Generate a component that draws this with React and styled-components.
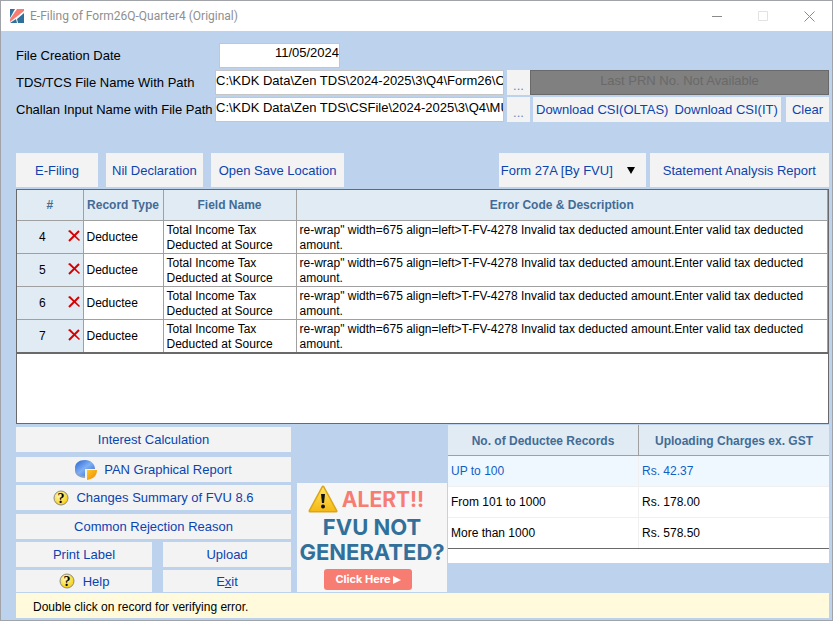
import React, { useState } from "react"
import styled, { createGlobalStyle } from "styled-components"

const GlobalStyle = createGlobalStyle`
  * {
    box-sizing: border-box;
  }

  body {
    margin: 0;
    background: #bcd2ed;
    font-family: "Liberation Sans", Arial, sans-serif;
    font-size: 13px;
    color: #000;
  }

  button,
  input,
  select {
    font: inherit;
  }
`

const Window = styled.div`
  min-height: 100vh;
  display: flex;
  flex-direction: column;
  background: #bcd2ed;
  border: 1px solid #a0a3a8;
`

const TitleBar = styled.header`
  display: flex;
  align-items: center;
  height: 30px;
  padding-left: 8px;
  background: #fff;
`

const Title = styled.h1`
  flex: 1;
  margin: 0 0 0 5px;
  font-family: Roboto, "Open Sans", sans-serif;
  font-size: 12px;
  font-weight: 400;
  color: #8f8f8f;
`

const WindowButton = styled.button`
  display: flex;
  align-items: center;
  justify-content: center;
  width: 46px;
  height: 30px;
  padding: 0;
  border: none;
  background: none;
`

const Content = styled.main`
  flex: 1;
  display: flex;
  flex-direction: column;
  padding: 11px 3px 2px 15px;
`

const Form = styled.form`
  display: flex;
  flex-direction: column;
  gap: 2px;
`

const FormRow = styled.div`
  display: grid;
  grid-template-columns: 199px minmax(0, 292fr) 23px minmax(0, 299fr);
  align-items: center;
  height: ${(props) => props.$height || 25}px;
`

const FormLabel = styled.label`
  white-space: nowrap;
`

const TextInput = styled.input`
  height: 25px;
  min-width: 0;
  padding: 0 0 5px;
  border: 1px solid #c6c6c6;
  border-radius: 0;
  background: #fff;
  outline: none;
`

const DateInput = styled(TextInput)`
  width: 121px;
  margin-left: 4px;
  text-align: right;
`

const PathInput = styled(TextInput)`
  margin-right: 3px;
`

const FlatButton = styled.button`
  display: flex;
  align-items: center;
  justify-content: center;
  height: ${(props) => props.$height || 25}px;
  padding: 0 ${(props) => props.$pad || 0}px;
  border: none;
  background: #f3f3f3;
  color: #0b43b0;
  white-space: nowrap;
`

const BrowseButton = styled(FlatButton)`
  padding-top: 6px;
  color: #6c86bd;
`

const RowActions = styled.div`
  display: flex;
  justify-content: space-between;
  padding-left: ${(props) => props.$inset || 0}px;
`

const ButtonPair = styled.div`
  display: flex;
`

const PrnButton = styled(FlatButton)`
  flex: 1;
  padding-bottom: 4px;
  border: 1px solid #696969;
  background: #808080;
  color: #696969;
`

const Toolbar = styled.div`
  display: flex;
  justify-content: space-between;
  margin: 31px 0 2px;
`

const ToolbarGroup = styled.div`
  display: flex;
  gap: ${(props) => props.$gap}px;
`

const SelectBox = styled.div`
  position: relative;
  width: 147px;

  svg {
    position: absolute;
    right: 11px;
    top: 14px;
    pointer-events: none;
  }
`

const FormSelect = styled.select`
  appearance: none;
  width: 100%;
  height: 34px;
  padding: 0 24px 0 2px;
  border: none;
  border-radius: 0;
  background: #f3f3f3;
  color: #0b43b0;
`

const GridPanel = styled.section`
  height: 235px;
  border: 1px solid #696969;
  background: #fff;
`

const ErrorTable = styled.table`
  width: 100%;
  table-layout: fixed;
  border-collapse: collapse;
  border-bottom: 2px solid #696969;
  font-size: 12px;
  line-height: 15px;

  th,
  td {
    padding: 2px 3px 0;
    border-right: 1px solid #a0a0a0;
    border-bottom: 1px solid #a0a0a0;
  }

  th {
    height: 30px;
    background: #e1ebf4;
    color: #436b95;
  }

  td {
    height: 33px;
  }
`

const NumberCell = styled.td`
  background: #e1ebf4;
`

const NumberContent = styled.div`
  display: flex;
  align-items: center;
  justify-content: space-between;
  padding-left: 19px;

  svg {
    margin-bottom: 3px;
  }
`

const Lower = styled.div`
  display: grid;
  grid-template-columns: 280fr 150px 381fr;
  column-gap: 1px;
  align-items: start;
  margin-top: 1px;
`

const Actions = styled.nav`
  display: grid;
  grid-template-columns: 136fr 128fr;
  gap: 3px 11px;
  margin-right: 5px;
  padding-top: 2px;
`

const WideButton = styled(FlatButton)`
  grid-column: 1 / -1;
  gap: 7px;
  margin-bottom: ${(props) => props.$after || 0}px;
`

const IconButton = styled(FlatButton)`
  gap: 8px;
`

const AlertCard = styled.aside`
  display: flex;
  flex-direction: column;
  align-items: center;
  align-self: end;
  height: 109px;
  background: #f6f6f6;
  font-family: Inter, sans-serif;
  font-weight: 700;
  font-size: 22px;
  line-height: 25px;
  color: #31709b;
  white-space: nowrap;
`

const AlertHeading = styled.div`
  display: flex;
  align-items: center;
  gap: 4px;
  height: 32px;
  padding-right: 12px;
  font-size: 21px;
  color: #f77d73;
`

const ClickHere = styled.button`
  display: flex;
  align-items: center;
  justify-content: center;
  gap: 2px;
  width: 88px;
  height: 21px;
  margin: 4px 8px 0 0;
  padding: 0;
  border: none;
  border-radius: 3px;
  background: #f77d73;
  color: #fff;
  font-size: 11px;
  font-weight: 700;
`

const ChargesPanel = styled.section`
  height: 138px;
  background: #fff;
`

const ChargesTable = styled.table`
  width: 100%;
  table-layout: fixed;
  border-collapse: collapse;
  font-size: 12px;

  th,
  td {
    height: 31px;
    padding: 0 3px;
    text-align: left;
    border-bottom: 1px solid #f0f0f0;
  }

  td + td {
    border-left: 1px solid #f0f0f0;
  }

  th {
    height: 30px;
    padding-top: 2px;
    background: #e1ebf4;
    color: #436b95;
    text-align: center;
    border-bottom: 1px solid #a0a0a0;
  }

  th + th {
    border-left: 1px solid #a0a0a0;
  }

  tbody tr:last-child td {
    border-bottom: 1px solid #696969;
  }
`

const ChargeRow = styled.tr`
  background: ${(props) => (props.$selected ? "#f0f8ff" : "#fff")};
  color: ${(props) => (props.$selected ? "#0f5fc4" : "#000")};
`

const StatusBar = styled.footer`
  height: 25px;
  margin-top: 1px;
  padding-left: 17px;
  background: #fffadc;
  font-size: 12px;
  line-height: 29px;
`

const AppLogo = () => (
  <svg width="16" height="16" viewBox="0 0 16 16" aria-hidden="true">
    <path d="M1 1h5L1 10z" fill="#2f6f9b" />
    <path d="M8 1h7v2L1 14v-3z" fill="#f77d73" />
    <path d="M15 5v10H9l-1-4z" fill="#2f6f9b" />
    <path d="M7 11l1 4H1z" fill="#2f6f9b" />
  </svg>
)

const CrossIcon = () => (
  <svg width="12" height="12" viewBox="0 0 12 12" aria-hidden="true">
    <path d="M0 1l2-1 10 10-1 1z" fill="#d60000" />
    <path d="M11 1L1 11" stroke="#d60000" strokeWidth="2" />
  </svg>
)

const HelpIcon = () => (
  <svg width="16" height="16" viewBox="0 0 16 16" aria-hidden="true">
    <defs>
      <radialGradient id="help-fill" cx="0.4" cy="0.35" r="0.7">
        <stop offset="0" stopColor="#fffbb8" />
        <stop offset="1" stopColor="#f7cb00" />
      </radialGradient>
    </defs>
    <circle cx="8" cy="8" r="7" fill="url(#help-fill)" stroke="#8c8c8c" />
    <text
      x="8"
      y="12.5"
      textAnchor="middle"
      fontFamily="Liberation Serif, serif"
      fontWeight="700"
      fontSize="14"
      fill="#000"
    >
      ?
    </text>
  </svg>
)

const PieIcon = () => (
  <svg width="22" height="20" viewBox="0 0 22 20" aria-hidden="true">
    <defs>
      <linearGradient id="pie-blue" x1="0" y1="0" x2="1" y2="1">
        <stop offset="0" stopColor="#2760cf" />
        <stop offset="0.5" stopColor="#7fb0f5" />
        <stop offset="1" stopColor="#2e62c9" />
      </linearGradient>
      <linearGradient id="pie-gold" x1="0" y1="0" x2="1" y2="1">
        <stop offset="0" stopColor="#ffc928" />
        <stop offset="1" stopColor="#ee8500" />
      </linearGradient>
    </defs>
    <path d="M0 8v3c0 4 5 7 10 7v-3z" fill="#8aa0c8" />
    <path
      d="M10 9h10c0-5-4-9-10-9S0 3 0 8s4 8 10 8z"
      fill="url(#pie-blue)"
    />
    <path d="M11 9h11v2c0 5-4 9-11 9z" fill="#f3f3f3" />
    <path d="M12 10h10c0 6-4 9-10 10z" fill="url(#pie-gold)" />
  </svg>
)

const WarningIcon = () => (
  <svg width="30" height="28" viewBox="0 0 30 28" aria-hidden="true">
    <defs>
      <linearGradient id="warn-fill" x1="0" y1="0" x2="0" y2="1">
        <stop offset="0" stopColor="#ffe45c" />
        <stop offset="1" stopColor="#f5b916" />
      </linearGradient>
    </defs>
    <path
      d="M15 2 28 26H2z"
      fill="url(#warn-fill)"
      stroke="#d9a51b"
      strokeWidth="3"
      strokeLinejoin="round"
    />
    <path d="M15 2 28 26H2z" fill="url(#warn-fill)" />
    <path d="M13 9h4l-1 9h-2z" fill="#111" />
    <circle cx="15" cy="21.5" r="2" fill="#111" />
  </svg>
)

const errorRows = [4, 5, 6, 7].map((number) => ({
  number,
  type: "Deductee",
  field: "Total Income Tax Deducted at Source",
  description:
    're-wrap" width=675 align=left>T-FV-4278 Invalid tax deducted amount.Enter valid tax deducted amount.',
}))

const charges = [
  { records: "UP to 100", charge: "Rs. 42.37" },
  { records: "From 101 to 1000", charge: "Rs. 178.00" },
  { records: "More than 1000", charge: "Rs. 578.50" },
]

const PathRow = ({ id, label, initial, inset, children }) => {
  const [path, setPath] = useState(initial)

  return (
    <FormRow>
      <FormLabel htmlFor={id}>{label}</FormLabel>
      <PathInput
        id={id}
        value={path}
        onChange={(e) => setPath(e.target.value)}
      />
      <BrowseButton type="button">...</BrowseButton>
      <RowActions $inset={inset}>{children}</RowActions>
    </FormRow>
  )
}

const ErrorGrid = () => (
  <GridPanel>
    <ErrorTable>
      <colgroup>
        <col width="66" />
        <col width="80" />
        <col width="133" />
        <col />
      </colgroup>
      <thead>
        <tr>
          <th>#</th>
          <th>Record Type</th>
          <th>Field Name</th>
          <th>Error Code &amp; Description</th>
        </tr>
      </thead>
      <tbody>
        {errorRows.map((row) => (
          <tr key={row.number}>
            <NumberCell>
              <NumberContent>
                {row.number}
                <CrossIcon />
              </NumberContent>
            </NumberCell>
            <td>{row.type}</td>
            <td>{row.field}</td>
            <td>{row.description}</td>
          </tr>
        ))}
      </tbody>
    </ErrorTable>
  </GridPanel>
)

const Charges = () => {
  const [selected, setSelected] = useState(0)

  return (
    <ChargesPanel>
      <ChargesTable>
        <thead>
          <tr>
            <th>No. of Deductee Records</th>
            <th>Uploading Charges ex. GST</th>
          </tr>
        </thead>
        <tbody>
          {charges.map((item, index) => (
            <ChargeRow
              key={item.records}
              $selected={index === selected}
              onClick={() => setSelected(index)}
            >
              <td>{item.records}</td>
              <td>{item.charge}</td>
            </ChargeRow>
          ))}
        </tbody>
      </ChargesTable>
    </ChargesPanel>
  )
}

const App = () => {
  const [date, setDate] = useState("11/05/2024")

  return (
    <Window>
      <GlobalStyle />
      <TitleBar>
        <AppLogo />
        <Title>E-Filing of Form26Q-Quarter4 (Original)</Title>
        <WindowButton aria-label="Minimize">
          <svg width="10" height="10" stroke="#8a8a8a">
            <path d="M0 5.5h10" />
          </svg>
        </WindowButton>
        <WindowButton aria-label="Maximize" disabled>
          <svg width="10" height="10" stroke="#e2e2e2" fill="none">
            <path d="M.5.5h9v9h-9z" />
          </svg>
        </WindowButton>
        <WindowButton aria-label="Close">
          <svg width="11" height="11" stroke="#8a8a8a">
            <path d="M.5.5l10 10M10.5.5l-10 10" />
          </svg>
        </WindowButton>
      </TitleBar>
      <Content>
        <Form onSubmit={(e) => e.preventDefault()}>
          <FormRow $height={26}>
            <FormLabel htmlFor="creation-date">File Creation Date</FormLabel>
            <DateInput
              id="creation-date"
              value={date}
              onChange={(e) => setDate(e.target.value)}
            />
          </FormRow>
          <PathRow
            id="tds-path"
            label="TDS/TCS File Name With Path"
            initial="C:\KDK Data\Zen TDS\2024-2025\3\Q4\Form26\Original"
          >
            <PrnButton type="button" disabled>
              Last PRN No. Not Available
            </PrnButton>
          </PathRow>
          <PathRow
            id="challan-path"
            label="Challan Input Name with File Path"
            initial="C:\KDK Data\Zen TDS\CSFile\2024-2025\3\Q4\MUM"
            inset={3}
          >
            <ButtonPair>
              <FlatButton type="button" $pad={3}>
                Download CSI(OLTAS)
              </FlatButton>
              <FlatButton type="button" $pad={3}>
                Download CSI(IT)
              </FlatButton>
            </ButtonPair>
            <FlatButton type="button" $pad={6}>
              Clear
            </FlatButton>
          </PathRow>
        </Form>
        <Toolbar>
          <ToolbarGroup $gap={8}>
            <FlatButton $height={34} $pad={19}>
              E-Filing
            </FlatButton>
            <FlatButton $height={34} $pad={6}>
              Nil Declaration
            </FlatButton>
            <FlatButton $height={34} $pad={8}>
              Open Save Location
            </FlatButton>
          </ToolbarGroup>
          <ToolbarGroup $gap={4}>
            <SelectBox>
              <FormSelect aria-label="Form 27A">
                <option>Form 27A [By FVU]</option>
              </FormSelect>
              <svg width="8" height="7" aria-hidden="true">
                <path d="M0 0h8L4 7z" />
              </svg>
            </SelectBox>
            <FlatButton $height={34} $pad={13}>
              Statement Analysis Report
            </FlatButton>
          </ToolbarGroup>
        </Toolbar>
        <ErrorGrid />
        <Lower>
          <Actions>
            <WideButton $after={2}>Interest Calculation</WideButton>
            <WideButton>
              <PieIcon />
              PAN Graphical Report
            </WideButton>
            <WideButton $after={1}>
              <HelpIcon />
              Changes Summary of FVU 8.6
            </WideButton>
            <WideButton>Common Rejection Reason</WideButton>
            <FlatButton>Print Label</FlatButton>
            <FlatButton>Upload</FlatButton>
            <IconButton $height={22}>
              <HelpIcon />
              Help
            </IconButton>
            <FlatButton $height={22}>
              <span>
                E<u>x</u>it
              </span>
            </FlatButton>
          </Actions>
          <AlertCard>
            <AlertHeading>
              <WarningIcon />
              ALERT!!
            </AlertHeading>
            <div>FVU NOT</div>
            <div>GENERATED?</div>
            <ClickHere>
              Click Here
              <svg width="8" height="8" fill="#fff" aria-hidden="true">
                <path d="M0 0l8 4-8 4z" />
              </svg>
            </ClickHere>
          </AlertCard>
          <Charges />
        </Lower>
        <StatusBar>Double click on record for verifying error.</StatusBar>
      </Content>
    </Window>
  )
}

export default App
